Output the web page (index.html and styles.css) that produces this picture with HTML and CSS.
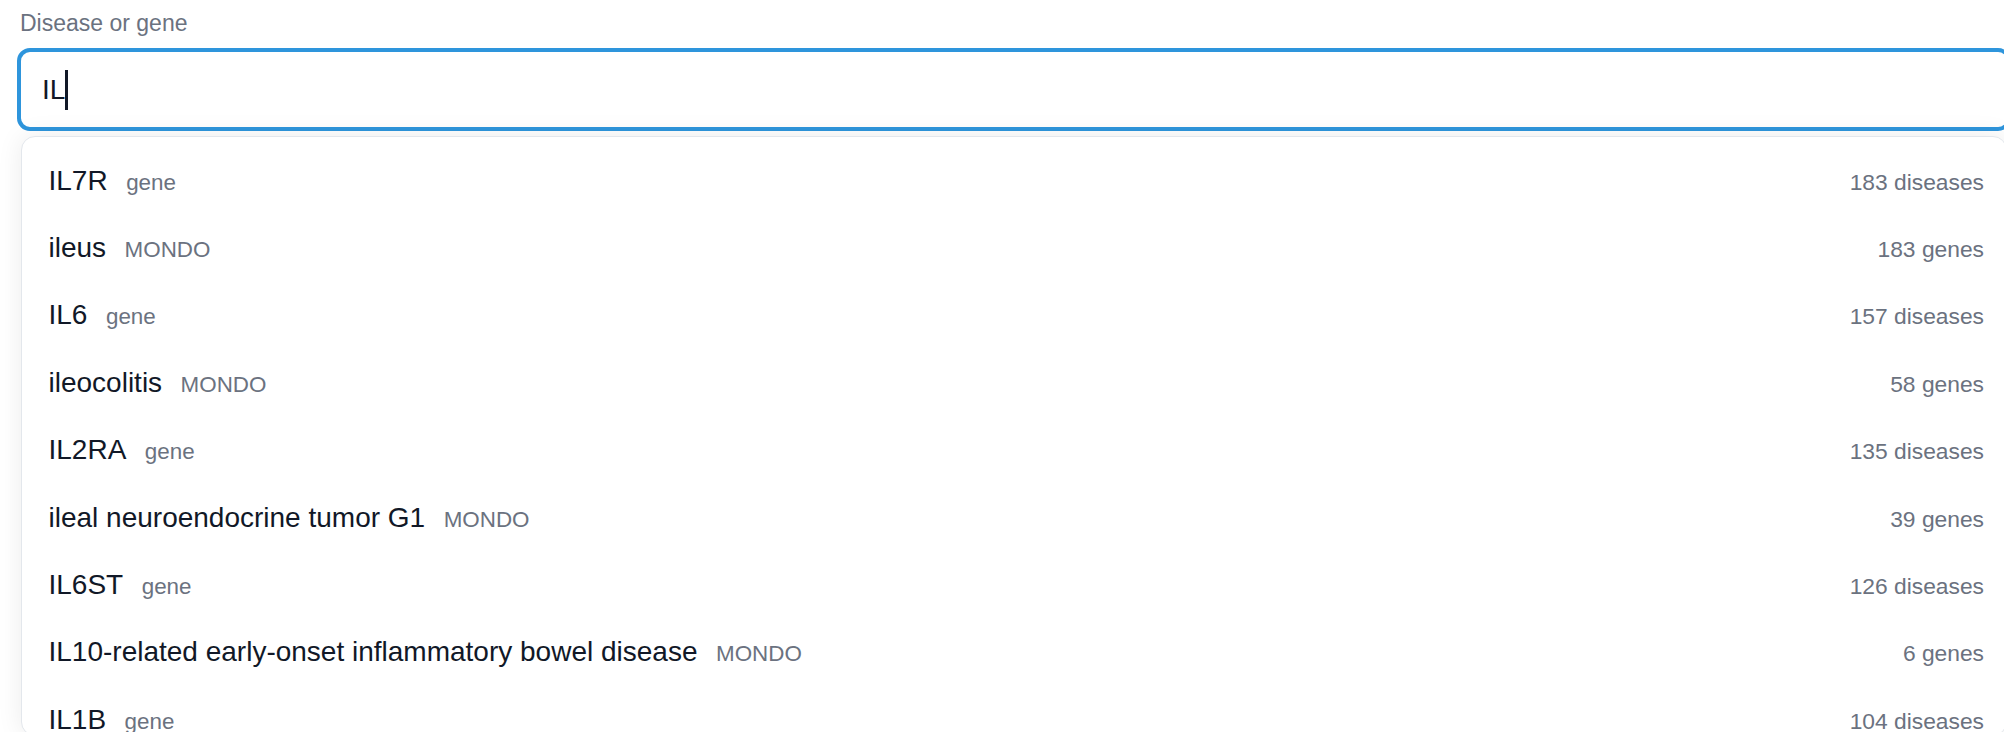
FILE: index.html
```html
<!DOCTYPE html>
<html lang="en">
<head>
<meta charset="utf-8">
<title>Disease or gene</title>
<link rel="stylesheet" href="styles.css">
</head>
<body>
<div class="search">
  <div class="search-label">Disease or gene</div>
  <div class="search-input"><span class="search-value">IL</span><span class="caret"></span></div>
  <div class="results">
    <div class="result"><span class="result-name">IL7R</span><span class="result-type">gene</span><span class="result-count">183 diseases</span></div>
    <div class="result"><span class="result-name">ileus</span><span class="result-type">MONDO</span><span class="result-count">183 genes</span></div>
    <div class="result"><span class="result-name">IL6</span><span class="result-type">gene</span><span class="result-count">157 diseases</span></div>
    <div class="result"><span class="result-name">ileocolitis</span><span class="result-type">MONDO</span><span class="result-count">58 genes</span></div>
    <div class="result"><span class="result-name">IL2RA</span><span class="result-type">gene</span><span class="result-count">135 diseases</span></div>
    <div class="result"><span class="result-name">ileal neuroendocrine tumor G1</span><span class="result-type">MONDO</span><span class="result-count">39 genes</span></div>
    <div class="result"><span class="result-name">IL6ST</span><span class="result-type">gene</span><span class="result-count">126 diseases</span></div>
    <div class="result"><span class="result-name">IL10-related early-onset inflammatory bowel disease</span><span class="result-type">MONDO</span><span class="result-count">6 genes</span></div>
    <div class="result"><span class="result-name">IL1B</span><span class="result-type">gene</span><span class="result-count">104 diseases</span></div>
  </div>
</div>
</body>
</html>
```

FILE: styles.css
```css
html, body {
  margin: 0;
  padding: 0;
  background: #ffffff;
  overflow: hidden;
}

body {
  font-family: "Liberation Sans", Arial, sans-serif;
  color: #111827;
}

.search {
  width: 1994px;
  padding: 6px 0 0 17px;
}

.search-label {
  padding-left: 3px;
  font-size: 23px;
  line-height: 34px;
  color: #6b7280;
  margin-bottom: 8px;
}

.search-input {
  box-sizing: border-box;
  height: 83px;
  border: 4px solid #2e95dc;
  border-radius: 13px;
  padding: 0 21px;
  display: flex;
  align-items: center;
  font-size: 28px;
  background: #ffffff;
}

.search-value {
  color: #111827;
}

.caret {
  display: inline-block;
  width: 2.5px;
  height: 40px;
  background: #111827;
  vertical-align: -9.3px;
}

.results {
  position: relative;
  box-sizing: border-box;
  margin: 5px 4px 0 4px;
  height: 600px;
  overflow: hidden;
  border: 1.4px solid #e3e7ec;
  border-radius: 14px;
  background: #ffffff;
  box-shadow: 0 0 26px rgba(0, 0, 0, 0.08);
  padding: 10px 22px 0 26.5px;
}

.result {
  display: flex;
  align-items: baseline;
  height: 67.4px;
  box-sizing: border-box;
  padding-top: 12.7px;
  line-height: 42px;
}

.result-name {
  font-size: 28px;
  line-height: 42px;
  color: #111827;
}

.result-type {
  margin-left: 18.5px;
  font-size: 22.4px;
  line-height: 22.4px;
  color: #6b7280;
}

.result-count {
  margin-left: auto;
  font-size: 22.8px;
  line-height: 22.8px;
  color: #6b7280;
}
```
